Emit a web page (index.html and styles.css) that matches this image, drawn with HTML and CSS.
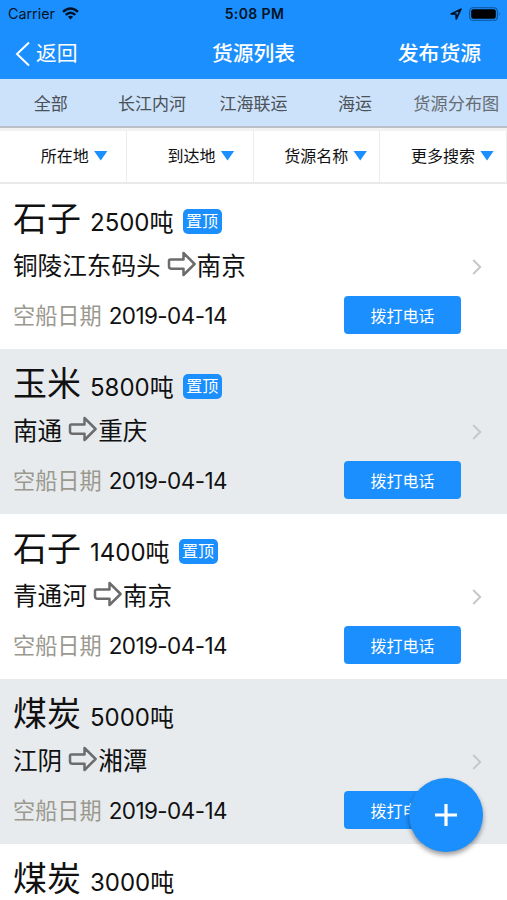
FILE: index.html
```html
<!DOCTYPE html>
<html lang="zh-CN">
<head>
<meta charset="utf-8">
<title>货源列表</title>
<link rel="stylesheet" href="styles.css">
</head>
<body>
<svg class="defs" width="0" height="0" aria-hidden="true">
  <symbol id="arrow" viewBox="0 0 30 26"><path d="M3.4 8.4H16.5V2L27.6 13 16.5 24V17.8H4.6Q2 17.8 2 15.6V9.8Q2 8.4 3.4 8.4Z" fill="none" stroke="#6c6c6c" stroke-width="2.5" stroke-linejoin="round"/></symbol>
  <symbol id="chevron" viewBox="0 0 10 18"><path d="M1.2 2 8.2 9 1.2 16" fill="none" stroke="#c5c8ca" stroke-width="2"/></symbol>
</svg>
<div class="screen">
  <header class="header">
    <div class="status">
      <div class="carrier"><span>Carrier</span>
        <svg width="17" height="13" viewBox="0 0 17 13"><g fill="none" stroke="#001326" stroke-width="2.4"><path d="M1 4.9Q8.5-1.9 16 4.9"/><path d="M3.7 7.9Q8.5 3.5 13.3 7.9"/></g><path d="M5.9 9.8Q8.5 7.6 11.1 9.8L8.5 12.6Z" fill="#001326"/></svg>
      </div>
      <div class="time">5:08 PM</div>
      <div class="power">
        <svg width="12" height="12" viewBox="0 0 12 12"><path d="M1.2 6 10.9 1.2 6.3 10.9 6 6.2Z" fill="none" stroke="#001326" stroke-width="1.7" stroke-linejoin="round"/></svg>
        <svg width="32" height="14" viewBox="0 0 32 14"><rect x=".7" y=".7" width="27.6" height="12.6" rx="3.4" fill="none" stroke="#0c5395" stroke-width="1.1"/><rect x="2.2" y="2.2" width="24.6" height="9.6" rx="2" fill="#000"/><path d="M29.8 4.8Q31.5 7 29.8 9.2Z" fill="#0c5395"/></svg>
      </div>
    </div>
    <nav class="navbar">
      <a class="back"><svg width="16" height="26" viewBox="0 0 16 26"><path d="M14 1.5 2 13 14 24.5" fill="none" stroke="#fff" stroke-width="2"/></svg><span>返回</span></a>
      <h1>货源列表</h1>
      <a class="publish">发布货源</a>
    </nav>
  </header>
  <nav class="tabs"><a>全部</a><a>长江内河</a><a>江海联运</a><a>海运</a><a class="map">货源分布图</a></nav>
  <div class="filters"><a>所在地<i></i></a><a>到达地<i></i></a><a>货源名称<i></i></a><a>更多搜索<i></i></a></div>
  <main>
    <article class="cargo">
      <h2><b>石子</b><span>2500吨</span><em>置顶</em></h2>
      <p class="route">铜陵江东码头<svg><use href="#arrow"/></svg>南京</p>
      <p class="date"><span>空船日期</span>2019-04-14</p>
      <button>拨打电话</button><svg class="more"><use href="#chevron"/></svg>
    </article>
    <article class="cargo">
      <h2><b>玉米</b><span>5800吨</span><em>置顶</em></h2>
      <p class="route">南通<svg><use href="#arrow"/></svg>重庆</p>
      <p class="date"><span>空船日期</span>2019-04-14</p>
      <button>拨打电话</button><svg class="more"><use href="#chevron"/></svg>
    </article>
    <article class="cargo">
      <h2><b>石子</b><span>1400吨</span><em>置顶</em></h2>
      <p class="route">青通河<svg><use href="#arrow"/></svg>南京</p>
      <p class="date"><span>空船日期</span>2019-04-14</p>
      <button>拨打电话</button><svg class="more"><use href="#chevron"/></svg>
    </article>
    <article class="cargo">
      <h2><b>煤炭</b><span>5000吨</span></h2>
      <p class="route">江阴<svg><use href="#arrow"/></svg>湘潭</p>
      <p class="date"><span>空船日期</span>2019-04-14</p>
      <button>拨打电话</button><svg class="more"><use href="#chevron"/></svg>
    </article>
    <article class="cargo">
      <h2><b>煤炭</b><span>3000吨</span></h2>
    </article>
  </main>
  <div class="fab"><svg width="24" height="24" viewBox="0 0 24 24"><path d="M12 1V23M1 12H23" stroke="#fff" stroke-width="3.2"/></svg></div>
</div>
</body>
</html>
```
FILE: styles.css
```css
* { box-sizing: border-box; }
body { margin: 0; font-family: Inter, "Noto Sans CJK SC", sans-serif; color: #111; }
h1, h2, p { margin: 0; font-weight: 400; }
.defs { display: block; }
.screen { position: relative; width: 507px; height: 900px; overflow: hidden; background: #fff; }
.header { height: 79px; background: #1c8ffe; }
.status { display: grid; grid-template-columns: 1fr auto 1fr; align-items: center; height: 27px; padding: 0 6px 1px 8px; color: #001326; font-size: 14.3px; line-height: 26px; }
.carrier, .power { display: flex; align-items: center; gap: 7px; }
.power { justify-content: flex-end; }
.time { padding-top: 1px; font-weight: 600; font-size: 14px; letter-spacing: .4px; }
.navbar { display: grid; grid-template-columns: 1fr auto 1fr; align-items: center; height: 52px; padding: 0 26px 0 15px; color: #fff; font-size: 20.8px; line-height: 51px; }
.navbar h1 { padding-top: 1px; font-size: 20.8px; font-weight: 500; margin-left: 11px; }
.back { display: flex; align-items: center; gap: 5px; padding-top: 1px; }
.publish { padding-top: 1px; text-align: right; font-weight: 500; }
.tabs { display: grid; grid-template-columns: repeat(5, 1fr); height: 49px; border-bottom: 2px solid #bbc0c7; background: #cce2fa; color: #4b5157; font-size: 17px; line-height: 50px; text-align: center; white-space: nowrap; }
.tabs .map { color: #666d75; font-size: 17.2px; }
.filters { display: grid; grid-template-columns: repeat(4, 1fr); height: 56px; border-top: 3px solid #f1f2f3; border-bottom: 2px solid #e9e9e9; font-size: 16px; line-height: 51px; }
.filters a { display: flex; align-items: center; justify-content: flex-end; padding-right: 18px; border-right: 1px solid #ececec; white-space: nowrap; }
.filters a:nth-child(n+3) { padding-right: 12px; }
.filters i { width: 14px; height: 10px; margin: -2px 0 0 5px; background: #1c8ffe; clip-path: polygon(0 0, 100% 0, 50% 100%); }
.cargo { display: grid; grid-template: 73px 48px 44px / 1fr 117px; height: 165px; padding-right: 46px; padding-left: 13px; position: relative; }
.cargo:nth-child(even) { background: #e7ebee; }
h2 { display: flex; align-items: center; grid-column: 1 / 3; line-height: 71px; }
h2 b { margin-top: -5px; font-size: 34px; font-weight: 400; }
h2 span { margin: 3px 0 0 9px; font-size: 24px; }
h2 em { margin: 1px 0 0 9px; width: 39px; height: 25px; border-radius: 5px; background: #1c8ffe; color: #fff; font-size: 16px; font-style: normal; line-height: 24px; text-align: center; }
.route { display: flex; align-items: center; grid-column: 1 / 3; height: 17px; margin-top: -2px; font-size: 24.6px; }
.route svg { width: 30px; height: 26px; margin: 0 0 0 6px; }
.date { height: 36px; margin-top: -7px; font-size: 22.5px; letter-spacing: -.6px; line-height: 36px; white-space: nowrap; }
.date span { margin-right: 7px; color: #9b998f; font-size: 22.2px; letter-spacing: 0; }
button { height: 38px; margin-top: -9px; padding: 0; border: 0; border-radius: 4px; background: #1c8ffe; color: #fff; font: 16px/38px "Noto Sans CJK SC", sans-serif; }
.more { position: absolute; right: 25px; top: 74px; width: 10px; height: 18px; }
.fab { position: absolute; left: 409px; top: 778px; width: 74px; height: 74px; display: flex; align-items: center; justify-content: center; border-radius: 50%; background: #1c8ffe; box-shadow: 0 3px 5px rgba(0,0,0,.4); }
```
